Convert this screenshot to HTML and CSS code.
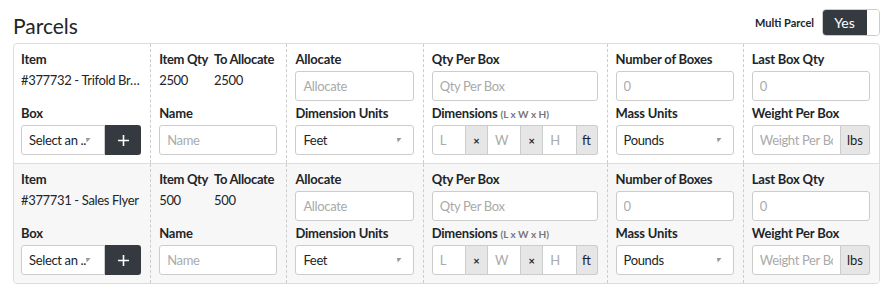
FILE: index.html
```html
<!DOCTYPE html>
<html lang="en">
<head>
    <meta charset="UTF-8">
    <meta name="viewport" content="width=device-width, initial-scale=1.0">
    <title>Parcels</title>
    <link rel="stylesheet" href="styles.css">
</head>
<body>
    <div class="page">
        <div class="page-head">
            <h1 class="title">Parcels</h1>
            <div class="multi">
                <span class="multi-label">Multi Parcel</span>
                <div class="toggle">
                    <span class="toggle-on">Yes</span>
                    <span class="toggle-off"></span>
                </div>
            </div>
        </div>

        <div class="parcels">
            <div class="parcel">
                <div class="cell">
                    <div class="label">Item</div>
                    <div class="value ellipsis">#377732 - Trifold Brochure</div>
                    <div class="label">Box</div>
                    <div class="group">
                        <div class="select select-box">Select an ..<svg class="arrow" width="5" height="5" viewBox="0 0 5 5"><path d="M0 0H4.5L0.8 4.5Z"/></svg></div>
                        <button class="btn-add"><svg width="11" height="11" viewBox="0 0 11 11"><path d="M5.5 0V11M0 5.5H11"/></svg></button>
                    </div>
                </div>
                <div class="cell">
                    <div class="qty">
                        <div>
                            <div class="label">Item Qty</div>
                            <div class="value">2500</div>
                        </div>
                        <div>
                            <div class="label">To Allocate</div>
                            <div class="value">2500</div>
                        </div>
                    </div>
                    <div class="label">Name</div>
                    <input class="input" placeholder="Name">
                </div>
                <div class="cell">
                    <div class="label">Allocate</div>
                    <input class="input field" placeholder="Allocate">
                    <div class="label">Dimension Units</div>
                    <div class="select">Feet<svg class="arrow" width="5" height="5" viewBox="0 0 5 5"><path d="M0 0H4.5L0.8 4.5Z"/></svg></div>
                </div>
                <div class="cell">
                    <div class="label">Qty Per Box</div>
                    <input class="input field" placeholder="Qty Per Box">
                    <div class="label">Dimensions <small>(L x W x H)</small></div>
                    <div class="group">
                        <input class="input part first" placeholder="L">
                        <span class="addon times">&times;</span>
                        <input class="input part" placeholder="W">
                        <span class="addon times">&times;</span>
                        <input class="input part" placeholder="H">
                        <span class="addon last">ft</span>
                    </div>
                </div>
                <div class="cell">
                    <div class="label">Number of Boxes</div>
                    <input class="input field" placeholder="0">
                    <div class="label">Mass Units</div>
                    <div class="select">Pounds<svg class="arrow" width="5" height="5" viewBox="0 0 5 5"><path d="M0 0H4.5L0.8 4.5Z"/></svg></div>
                </div>
                <div class="cell">
                    <div class="label">Last Box Qty</div>
                    <input class="input field" placeholder="0">
                    <div class="label">Weight Per Box</div>
                    <div class="group">
                        <input class="input part first" placeholder="Weight Per Box">
                        <span class="addon last lbs">lbs</span>
                    </div>
                </div>
            </div>

            <div class="parcel">
                <div class="cell">
                    <div class="label">Item</div>
                    <div class="value ellipsis">#377731 - Sales Flyer</div>
                    <div class="label">Box</div>
                    <div class="group">
                        <div class="select select-box">Select an ..<svg class="arrow" width="5" height="5" viewBox="0 0 5 5"><path d="M0 0H4.5L0.8 4.5Z"/></svg></div>
                        <button class="btn-add"><svg width="11" height="11" viewBox="0 0 11 11"><path d="M5.5 0V11M0 5.5H11"/></svg></button>
                    </div>
                </div>
                <div class="cell">
                    <div class="qty">
                        <div>
                            <div class="label">Item Qty</div>
                            <div class="value">500</div>
                        </div>
                        <div>
                            <div class="label">To Allocate</div>
                            <div class="value">500</div>
                        </div>
                    </div>
                    <div class="label">Name</div>
                    <input class="input" placeholder="Name">
                </div>
                <div class="cell">
                    <div class="label">Allocate</div>
                    <input class="input field" placeholder="Allocate">
                    <div class="label">Dimension Units</div>
                    <div class="select">Feet<svg class="arrow" width="5" height="5" viewBox="0 0 5 5"><path d="M0 0H4.5L0.8 4.5Z"/></svg></div>
                </div>
                <div class="cell">
                    <div class="label">Qty Per Box</div>
                    <input class="input field" placeholder="Qty Per Box">
                    <div class="label">Dimensions <small>(L x W x H)</small></div>
                    <div class="group">
                        <input class="input part first" placeholder="L">
                        <span class="addon times">&times;</span>
                        <input class="input part" placeholder="W">
                        <span class="addon times">&times;</span>
                        <input class="input part" placeholder="H">
                        <span class="addon last">ft</span>
                    </div>
                </div>
                <div class="cell">
                    <div class="label">Number of Boxes</div>
                    <input class="input field" placeholder="0">
                    <div class="label">Mass Units</div>
                    <div class="select">Pounds<svg class="arrow" width="5" height="5" viewBox="0 0 5 5"><path d="M0 0H4.5L0.8 4.5Z"/></svg></div>
                </div>
                <div class="cell">
                    <div class="label">Last Box Qty</div>
                    <input class="input field" placeholder="0">
                    <div class="label">Weight Per Box</div>
                    <div class="group">
                        <input class="input part first" placeholder="Weight Per Box">
                        <span class="addon last lbs">lbs</span>
                    </div>
                </div>
            </div>
        </div>
    </div>
</body>
</html>
```

FILE: styles.css
```css
* {
    box-sizing: border-box;
}
body {
    margin: 0;
    font-family: 'Lato', sans-serif;
    font-size: 13px;
    letter-spacing: -0.35px;
    color: #212529;
    background: #fff;
}
.page {
    padding: 9px 15px 0 13px;
}
.page-head {
    display: flex;
    justify-content: space-between;
    align-items: flex-start;
    height: 34px;
}
.title {
    margin: 5px 0 0;
    font-size: 21px;
    font-weight: 400;
    line-height: 24px;
    letter-spacing: 0;
}
.multi {
    display: flex;
    align-items: center;
    gap: 8px;
}
.multi-label {
    font-size: 11px;
    font-weight: 700;
    letter-spacing: 0;
}
.toggle {
    display: flex;
    height: 27px;
    border: 1px solid #ccc;
    border-radius: 4px;
    overflow: hidden;
}
.toggle-on {
    width: 45px;
    margin: -1px 0 -1px -1px;
    background: #343a40;
    color: #fff;
    font-size: 14px;
    letter-spacing: 0;
    display: flex;
    align-items: center;
    justify-content: center;
}
.toggle-off {
    width: 12px;
    background: #fff;
}
.parcels {
    border: 1px solid #ddd;
    border-radius: 4px;
    overflow: hidden;
}
.parcel {
    display: grid;
    grid-template-columns: 1fr 1fr 1fr 1.35fr 1fr 1fr;
}
.parcel + .parcel {
    border-top: 1px solid #ddd;
    background: #f7f7f7;
}
.cell {
    padding: 5px 9px 8px 8px;
    min-width: 0;
}
.cell:first-child {
    padding-left: 7px;
}
.cell + .cell {
    border-left: 1px dashed #ccc;
}
.label {
    font-weight: 700;
    letter-spacing: -0.2px;
    line-height: 20px;
    height: 22px;
    padding-bottom: 2px;
    white-space: nowrap;
}
.label small {
    font-size: 10px;
    line-height: 1;
    letter-spacing: 0;
    color: #777;
}
.value {
    height: 30px;
    line-height: 18px;
    margin-bottom: 2px;
    white-space: nowrap;
}
.ellipsis {
    overflow: hidden;
    text-overflow: ellipsis;
}
.qty {
    display: flex;
    gap: 6px;
}
.qty .label {
    letter-spacing: -0.35px;
}
.input {
    display: block;
    width: 100%;
    height: 30px;
    padding: 0 7px;
    border: 1px solid #ccc;
    border-radius: 3px;
    background: #fff;
    font-family: inherit;
    font-size: 13px;
    letter-spacing: -0.35px;
    color: #212529;
    outline: none;
}
.input::placeholder {
    color: #aaa;
}
.field {
    margin-bottom: 2px;
}
.select {
    display: flex;
    align-items: center;
    justify-content: space-between;
    height: 30px;
    padding: 0 11px 0 7px;
    border: 1px solid #ccc;
    border-radius: 3px;
    background: #fff;
    white-space: nowrap;
}
.arrow {
    fill: #999;
}
.group {
    display: flex;
    height: 30px;
}
.select-box {
    flex: 1;
    min-width: 0;
    justify-content: flex-start;
    padding-right: 4px;
    border-radius: 3px 0 0 3px;
}
.btn-add {
    width: 36px;
    border: none;
    border-radius: 0 3px 3px 0;
    background: #343a40;
    display: flex;
    align-items: center;
    justify-content: center;
    padding: 0;
}
.btn-add svg {
    stroke: #fff;
    stroke-width: 1.6;
}
.part {
    flex: 1;
    min-width: 0;
    border-radius: 0;
}
.part.first {
    border-radius: 3px 0 0 3px;
}
.addon {
    width: 21px;
    flex: none;
    display: flex;
    align-items: center;
    justify-content: center;
    background: #e6e6e6;
    border-top: 1px solid #ccc;
    border-bottom: 1px solid #ccc;
    letter-spacing: 0;
}
.addon.times {
    font-size: 11px;
    font-weight: 700;
}
.addon.last {
    border-right: 1px solid #ccc;
    border-radius: 0 3px 3px 0;
}
.addon.lbs {
    width: 29px;
}
```
